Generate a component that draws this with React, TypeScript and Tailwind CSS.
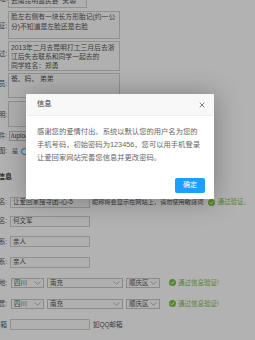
import { X } from 'lucide-react'

const FONT = "font-['Liberation_Sans','Noto_Sans_CJK_SC',sans-serif]"

function Chevron() {
  return (
    <svg viewBox="0 0 10 6" className="w-[7px] h-[4px] flex-shrink-0" fill="none" stroke="#888" strokeWidth="0.9">
      <polyline points="0.5,0.5 5,5 9.5,0.5" />
    </svg>
  )
}

function Check({ text }: { text: string }) {
  return (
    <div className="flex items-center gap-[2px]">
      <span className="w-[7px] h-[7px] rounded-full bg-[#7cc242] flex items-center justify-center">
        <svg viewBox="0 0 10 10" className="w-[5px] h-[5px]" fill="none" stroke="white" strokeWidth="2">
          <polyline points="1.5,5 4,7.5 8.5,2.5" />
        </svg>
      </span>
      <span className="text-[6.5px] text-[#80c050] whitespace-nowrap">{text}</span>
    </div>
  )
}

function Label({ children, bold }: { children: string; bold?: boolean }) {
  return (
    <div
      className={`ml-[-50px] flex-shrink-0 text-right pr-[1px] whitespace-nowrap ${
        bold ? 'w-[63px] font-bold text-[7px] text-[#333]' : 'w-[58px] text-[6.5px] text-[#555]'
      }`}
    >
      {children}
    </div>
  )
}

function Input({ value }: { value?: string }) {
  return (
    <div className="ml-[2px] w-[80px] h-[11px] border border-[#d0d0d0] bg-[#fdfdfd] flex items-center px-[2px] text-[6.5px] text-[#555] whitespace-nowrap overflow-hidden">
      {value}
    </div>
  )
}

function Select({ value, w }: { value: string; w: string }) {
  return (
    <div className={`${w} h-[10px] border border-[#c8c8c8] bg-[#fdfdfd] flex items-center justify-between px-[2px] text-[6.5px] text-[#555] whitespace-nowrap`}>
      <span>{value}</span>
      <Chevron />
    </div>
  )
}

function AreaRow() {
  return (
    <div className="flex items-center">
      <div className="ml-[3px] flex items-center gap-[3px]">
        <Select value="四川" w="w-[33px]" />
        <Select value="南充" w="w-[76px]" />
        <Select value="顺庆区" w="w-[34px]" />
      </div>
      <div className="ml-[9px]">
        <Check text="通过信息验证!" />
      </div>
    </div>
  )
}

export default function App() {
  return (
    <div className={`relative w-[255px] h-[340px] overflow-hidden bg-white ${FONT}`}>
      {/* form behind the shade */}
      <div className="flex flex-col mt-[-14px]">
        <div className="flex h-[22px]">
          <div className="self-end pb-[4px] w-[58px] ml-[-50px] text-right text-[6.5px] text-[#555]">址:</div>
          <div className="w-[79px] h-full border border-[#d0d0d0] bg-[#fdfdfd] flex items-end px-[2px] pb-[2px] text-[6.8px] leading-[9px] text-[#555]">
            云南昆明富民县&nbsp;&nbsp;关塬
          </div>
        </div>

        <div className="flex mt-[3px] h-[28px]">
          <div className="pt-[10px]"><Label>征:</Label></div>
          <div className="w-[112px] h-full border border-[#d0d0d0] bg-[#fdfdfd] px-[2px] text-[6.8px] leading-[10px] text-[#555] whitespace-nowrap">
            脸左右侧有一块长方形胎记(约一公
            <br />
            分)不知道是左脸还是右脸
          </div>
        </div>

        <div className="flex mt-[2px] h-[30px]">
          <div className="pt-[8px]"><Label>过:</Label></div>
          <div className="w-[112px] h-full border border-[#d0d0d0] bg-[#fdfdfd] px-[2px] pt-[1px] text-[6.8px] leading-[9px] text-[#555] whitespace-nowrap">
            2013年二月去昆明打工三月后去浙
            <br />
            江后失去联系和同学一起去的
            <br />
            同学姓名：郑勇
          </div>
        </div>

        <div className="flex mt-[2px] h-[25px]">
          <div className="pt-[6px]"><Label>员:</Label></div>
          <div className="w-[112px] h-full border border-[#d0d0d0] bg-[#fdfdfd] px-[2px] text-[6.8px] leading-[9px] text-[#555]">
            爸、妈、&nbsp;弟弟
          </div>
        </div>

        <div className="flex mt-[3px] h-[26px]">
          <div className="pt-[9px]"><Label>明:</Label></div>
          <div className="w-[112px] h-full border border-[#d0d0d0] bg-[#fdfdfd]" />
        </div>

        <div className="flex items-center mt-[4px] h-[10px]">
          <Label>件:</Label>
          <div className="ml-[1px] w-[150px] h-[10px] border border-[#c8c8c8] bg-[#fdfdfd] flex items-center px-[1px] text-[6.5px] text-[#444] whitespace-nowrap">
            /uploads/images/20140302.jpg
          </div>
          <span className="ml-[2px] text-[6.5px] text-[#555] whitespace-nowrap">支持jpg、gif、png</span>
        </div>

        <div className="flex items-center h-[20px]">
          <Label>图:</Label>
          <span className="ml-[4px] text-[6px] text-[#555]">是</span>
          <span className="ml-[3px] w-[7px] h-[7px] rounded-full border-[1.5px] border-[#1e9fff] bg-white" />
        </div>

        <div className="flex items-center h-[32px]">
          <Label bold>联系人信息</Label>
        </div>

        <div className="flex items-center h-[18px]">
          <Label>名:</Label>
          <Input value="让爱回家搜寻团-心-5" />
          <span className="ml-[2px] text-[6.2px] text-[#555] whitespace-nowrap">昵称将会显示在网站上，请勿使用敏感词</span>
          <div className="ml-[5px]">
            <Check text="通过验证。" />
          </div>
        </div>

        <div className="flex items-center h-[20px]">
          <Label>名:</Label>
          <Input value="何文军" />
        </div>

        <div className="flex items-center h-[21px]">
          <Label>系:</Label>
          <Input value="亲人" />
        </div>

        <div className="flex items-center h-[20px]">
          <Label>系:</Label>
          <Input value="亲人" />
        </div>

        <div className="flex items-center h-[21px]">
          <Label>地:</Label>
          <AreaRow />
        </div>

        <div className="flex items-center h-[21px]">
          <Label>贯:</Label>
          <AreaRow />
        </div>

        <div className="flex items-center h-[21px]">
          <Label>子邮箱</Label>
          <Input />
          <span className="ml-[3px] text-[6.5px] text-[#555] whitespace-nowrap">如QQ邮箱</span>
        </div>
      </div>

      {/* shade */}
      <div className="absolute inset-0 bg-black/30" />

      {/* dialog */}
      <div className="absolute left-[26px] top-[94px] w-[188px] h-[105px] bg-white shadow-[1px_1px_25px_rgba(0,0,0,0.3)] flex flex-col">
        <div className="h-[22px] flex-shrink-0 bg-[#f8f8f8] border-b border-[#eee] flex items-center justify-between pl-[11px] pr-[8px]">
          <span className="text-[7.3px] text-[#333]">信息</span>
          <X className="w-[8px] h-[8px] text-[#555]" strokeWidth={2.2} />
        </div>
        <div className="px-[11px] pt-[9px] text-[7.3px] leading-[13px] text-[#666] whitespace-nowrap">
          感谢您的爱情付出。系统以默认您的用户名为您的
          <br />
          手机号码，初始密码为123456，您可以用手机登录
          <br />
          让爱回家网站完善您信息并更改密码。
        </div>
        <div className="mt-auto flex justify-end pr-[9px] pb-[6px]">
          <button className="w-[30px] h-[15px] bg-[#1e9fff] rounded-[2px] text-white text-[7px] flex items-center justify-center">
            确定
          </button>
        </div>
      </div>
    </div>
  )
}
